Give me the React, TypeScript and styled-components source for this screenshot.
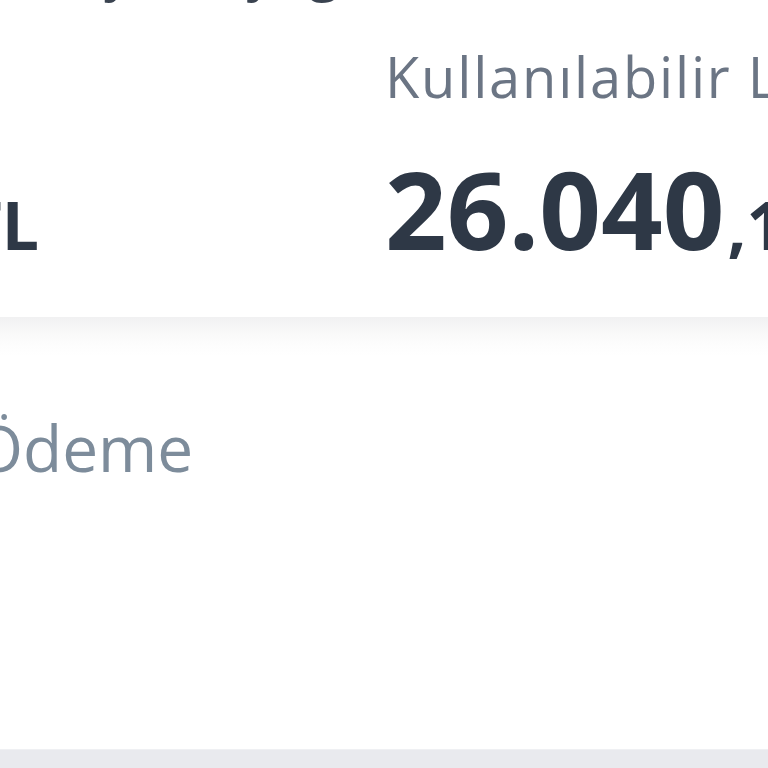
import styled, { createGlobalStyle } from 'styled-components'

const GlobalStyle = createGlobalStyle`
    html, body {
        margin: 0;
        padding: 0;
        background: #ffffff;
        overflow: hidden;
    }
    body {
        font-family: "Open Sans", "Noto Sans", sans-serif;
    }
`

const Viewport = styled.div`
    width: 768px;
    height: 768px;
    overflow: hidden;
    background: #ffffff;
`

// the screen is shown zoomed in, so the canvas is shifted to the crop
const Canvas = styled.div`
    width: 1700px;
    margin: -63px 0 0 -500px;
    display: flex;
    flex-direction: column;
`

const SummaryCard = styled.section`
    background: #ffffff;
    padding: 0 0 39px 24px;
    display: flex;
    flex-direction: column;
    gap: 47px;
`

const CardTitle = styled.p`
    margin: 0;
    font-size: 56px;
    line-height: 60px;
    word-spacing: 20px;
    color: #3a4350;
    white-space: nowrap;
    padding-left: 255px;
`

const Columns = styled.div`
    display: grid;
    grid-template-columns: 861px 1fr;
`

const Column = styled.div<{ $alignEnd?: boolean }>`
    display: flex;
    flex-direction: column;
    gap: 47px;
    align-items: ${p => (p.$alignEnd ? 'flex-end' : 'flex-start')};
    padding-right: ${p => (p.$alignEnd ? '346px' : '0')};
`

const Label = styled.span`
    align-self: flex-start;
    font-size: 56px;
    line-height: 64px;
    letter-spacing: 1.8px;
    color: #6b7584;
    white-space: nowrap;
`

const Amount = styled.div`
    display: flex;
    align-items: baseline;
    white-space: nowrap;
    color: #2e3846;
    font-weight: 700;
    font-size: 108px;
    line-height: 107px;
`

const Small = styled.span`
    font-size: 66px;
    margin-left: 3px;
`

const PaymentSection = styled.section`
    height: 432px;
    box-sizing: border-box;
    padding: 93px 0 0 273px;
    background: linear-gradient(to bottom, #f1f1f2 0px, #f8f8f8 14px, #fdfdfd 28px, #ffffff 40px);
`

const PaymentLabel = styled.span`
    font-size: 64px;
    line-height: 76.8px;
    color: #7d8c9b;
    white-space: nowrap;
`

const BottomBar = styled.div`
    height: 40px;
    background: #e9eaee;
    border-top: 1px solid #eff0f3;
`

export default function App() {
    return (
        <>
            <GlobalStyle />
            <Viewport>
                <Canvas>
                    <SummaryCard>
                        <CardTitle>Bu dönem yine yoğun, dikkat</CardTitle>
                        <Columns>
                            <Column $alignEnd>
                                <Label>Kart Limiti</Label>
                                <Amount>
                                    30.000<Small>,00 TL</Small>
                                </Amount>
                            </Column>
                            <Column>
                                <Label>Kullanılabilir Limit</Label>
                                <Amount>
                                    26.040<Small>,18 TL</Small>
                                </Amount>
                            </Column>
                        </Columns>
                    </SummaryCard>
                    <PaymentSection>
                        <PaymentLabel>Asgari Ödeme</PaymentLabel>
                    </PaymentSection>
                    <BottomBar />
                </Canvas>
            </Viewport>
        </>
    )
}
